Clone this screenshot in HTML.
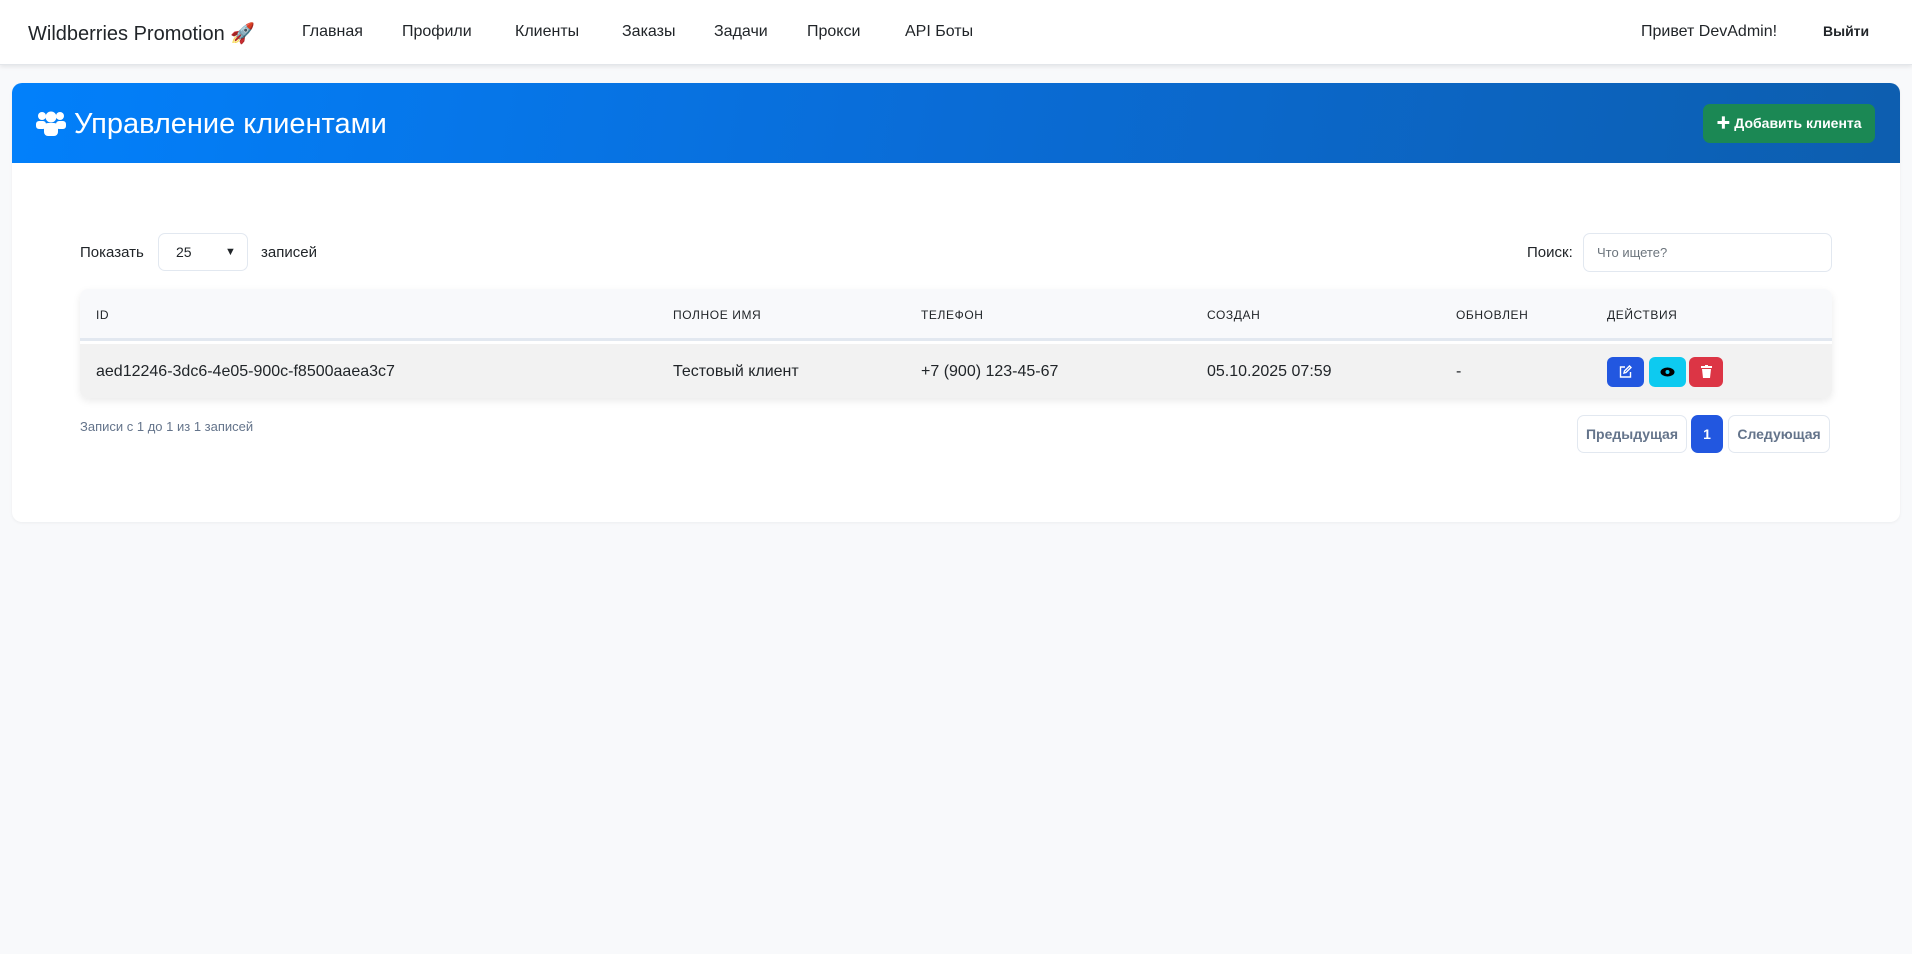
<!DOCTYPE html>
<html><head><meta charset="utf-8"><style>
*{box-sizing:border-box;margin:0;padding:0}
body{width:1912px;height:954px;background:#f8f9fb;font-family:"Liberation Sans","Noto Sans CJK SC",sans-serif;color:#212529;position:relative;overflow:hidden}
.nav{position:absolute;left:0;top:0;width:1912px;height:65px;background:#fff;box-shadow:0 2px 4px rgba(0,0,0,.08);border-bottom:1px solid #e3e6ea}
.a{position:absolute;top:23px;font-size:16px;color:#212529;white-space:nowrap}
.card{position:absolute;left:12px;top:83px;width:1888px;height:439px;background:#fff;border-radius:10px;box-shadow:0 1px 3px rgba(0,0,0,.05);overflow:hidden}
.hdr{position:absolute;left:0;top:0;width:100%;height:80px;background:linear-gradient(100deg,#0280fb 0%,#0a6cd6 50%,#0d5eaf 100%)}
.hdr h1{position:absolute;left:62px;top:25px;font-size:29px;font-weight:normal;color:#fff}
.btn{position:absolute;left:1691px;top:21px;width:172px;height:39px;background:#1b8854;border-radius:7px;color:#fff;font-size:14px;font-weight:bold;text-align:center;line-height:39px}
.t{position:absolute;font-size:15px;white-space:nowrap}
.th{position:absolute;top:19px;font-size:12px;letter-spacing:.6px;color:#212529}
.td{position:absolute;top:19px;font-size:16px;color:#212529;white-space:nowrap}
.ab{position:absolute;top:13px;width:37px;height:30px;border-radius:6px}
.pg{position:absolute;top:332px;height:38px;border:1px solid #e2e8f0;border-radius:7px;font-size:14px;font-weight:bold;color:#64748b;text-align:center;line-height:36px;background:#fff}
</style></head><body>
<div class="nav">
<div class="a" style="left:28px;top:21px;font-size:20px">Wildberries Promotion 🚀</div>
<div class="a" style="left:302px">Главная</div>
<div class="a" style="left:402px">Профили</div>
<div class="a" style="left:515px">Клиенты</div>
<div class="a" style="left:622px">Заказы</div>
<div class="a" style="left:714px">Задачи</div>
<div class="a" style="left:807px">Прокси</div>
<div class="a" style="left:905px">API Боты</div>
<div class="a" style="left:1641px">Привет DevAdmin!</div>
<div class="a" style="left:1823px;top:23px;font-size:14px;font-weight:bold">Выйти</div>
</div>
<div class="card">
<div class="hdr">
<svg style="position:absolute;left:24px;top:27px" width="30" height="26" viewBox="0 0 30 26" fill="#fff"><circle cx="6" cy="6" r="4"/><circle cx="24" cy="6" r="4"/><circle cx="15" cy="7" r="5.5"/><rect x="0" y="11" width="10" height="8" rx="3"/><rect x="20" y="11" width="10" height="8" rx="3"/><rect x="8" y="13" width="14" height="13" rx="4"/></svg>
<h1>Управление клиентами</h1>
<div class="btn">✚ Добавить клиента</div>
</div>
<div class="t" style="left:68px;top:161px">Показать</div>
<div style="position:absolute;left:146px;top:150px;width:90px;height:38px;border:1px solid #e2e8f0;border-radius:7px"><span style="position:absolute;left:17px;top:10px;font-size:14px">25</span><span style="position:absolute;left:66px;top:12px;font-size:11px">&#9660;</span></div>
<div class="t" style="left:249px;top:161px">записей</div>
<div class="t" style="left:1515px;top:161px">Поиск:</div>
<div style="position:absolute;left:1571px;top:150px;width:249px;height:39px;border:1px solid #e2e8f0;border-radius:7px"><span style="position:absolute;left:13px;top:11px;font-size:13px;color:#6c757d">Что ищете?</span></div>
<div style="position:absolute;left:68px;top:206px;width:1752px;height:109px;border-radius:8px;box-shadow:0 3px 8px rgba(0,0,0,.08);overflow:hidden">
<div style="position:absolute;left:0;top:0;width:100%;height:52px;background:#f8f9fb;border-bottom:3px solid #e2e8f0"></div>
<div class="th" style="left:16px">ID</div><div class="th" style="left:593px">ПОЛНОЕ ИМЯ</div><div class="th" style="left:841px">ТЕЛЕФОН</div><div class="th" style="left:1127px">СОЗДАН</div><div class="th" style="left:1376px">ОБНОВЛЕН</div><div class="th" style="left:1527px">ДЕЙСТВИЯ</div>
<div style="position:absolute;left:0;top:55px;width:100%;height:54px;background:#f2f2f2">
<div class="td" style="left:16px">aed12246-3dc6-4e05-900c-f8500aaea3c7</div>
<div class="td" style="left:593px">Тестовый клиент</div>
<div class="td" style="left:841px">+7 (900) 123-45-67</div>
<div class="td" style="left:1127px">05.10.2025 07:59</div>
<div class="td" style="left:1376px">-</div>
<div class="ab" style="left:1527px;background:#2257e0"><svg style="margin:8px 12px" width="13" height="13" viewBox="0 0 13 13" fill="none" stroke="#fff" stroke-width="1.4"><path d="M6 2H1.5v10h10V7"/><path d="M5 8l.5-2 5-5 1.5 1.5-5 5z"/></svg></div>
<div class="ab" style="left:1569px;background:#0dcaf0"><svg style="margin:10px 11px" width="15" height="10" viewBox="0 0 15 10"><ellipse cx="7.5" cy="5" rx="7" ry="4.5" fill="#000"/><circle cx="7.5" cy="5" r="2" fill="#0dcaf0"/></svg></div>
<div class="ab" style="left:1609px;width:34px;background:#dc3545"><svg style="margin:8px 12px" width="11" height="13" viewBox="0 0 11 13" fill="#fff"><rect x="0" y="1" width="11" height="2"/><rect x="4" y="0" width="3" height="2"/><path d="M1 4h9l-1 9H2z"/></svg></div>
</div>
</div>
<div style="position:absolute;left:68px;top:336px;font-size:13px;color:#64748b">Записи с 1 до 1 из 1 записей</div>
<div class="pg" style="left:1565px;width:110px">Предыдущая</div>
<div class="pg" style="left:1679px;width:32px;background:#2257e0;border-color:#2257e0;color:#fff">1</div>
<div class="pg" style="left:1716px;width:102px">Следующая</div>
</div>
</body></html>
